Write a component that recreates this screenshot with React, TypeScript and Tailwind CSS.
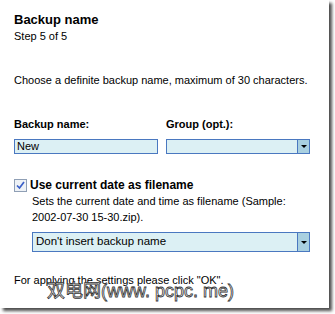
export default function App() {
  return (
    <div className="w-[335px] h-[314px] bg-white overflow-hidden relative" style={{ fontFamily: '"Liberation Sans", Arial, sans-serif' }}>
      <div className="w-[329px] h-[308px] bg-white shadow-[3px_3px_3px_rgba(0,0,0,0.7)] relative text-[11px] text-black">
        <div className="pl-[14px] pt-[12px]">
          <div className="text-[13px] font-bold leading-[16px]">Backup name</div>
          <div className="leading-[14px] mt-[1px]">Step 5 of 5</div>

          <div className="mt-[30px] leading-[14px]">Choose a definite backup name, maximum of 30 characters.</div>

          <div className="flex gap-[8px] mt-[30px]">
            <div className="w-[144px]">
              <div className="font-bold leading-[14px]">Backup name:</div>
              <div className="mt-[8px] h-[15px] border border-[#4a78c0] bg-[#dcf0f4] flex items-center px-[2px] leading-none">New</div>
            </div>
            <div className="w-[144px]">
              <div className="font-bold leading-[14px]">Group (opt.):</div>
              <div className="mt-[8px] h-[15px] border border-[#4a78c0] bg-[#dcf0f4] flex justify-end">
                <div className="w-[12px] h-full bg-[#a9d0e0] border-l border-[#4a78c0] flex items-center justify-center">
                  <div className="w-0 h-0 border-l-[3px] border-r-[3px] border-t-[3px] border-l-transparent border-r-transparent border-t-black" />
                </div>
              </div>
            </div>
          </div>

          <div className="flex items-center gap-[3px] mt-[24px]">
            <div className="w-[13px] h-[13px] border border-[#8f9fb5] bg-[#eef2f6] flex items-center justify-center">
              <svg width="9" height="9" viewBox="0 0 9 9">
                <path d="M1 4.5 L3.5 7 L8 1" fill="none" stroke="#3a5fc8" strokeWidth="1.7" />
              </svg>
            </div>
            <div className="text-[12px] font-bold leading-[14px]">Use current date as filename</div>
          </div>

          <div className="pl-[18px] mt-[1px]">
            <div className="leading-[16px]">
              Sets the current date and time as filename (Sample:
              <br />
              2002-07-30 15-30.zip).
            </div>
            <div className="mt-[7px] w-[278px] h-[20px] border border-[#4a78c0] bg-[#dcf0f4] flex items-center">
              <div className="flex-1 px-[3px] text-[11.5px]">Don't insert backup name</div>
              <div className="w-[12px] h-full bg-[#a9d0e0] border-l border-[#4a78c0] flex items-center justify-center">
                <div className="w-0 h-0 border-l-[3px] border-r-[3px] border-t-[3px] border-l-transparent border-r-transparent border-t-black" />
              </div>
            </div>
          </div>

          <div className="mt-[21px] leading-[14px]">For applying the settings please click "OK".</div>
        </div>

        <div
          className="absolute left-[47px] top-[282px] text-[18px] leading-none text-white"
          style={{ fontFamily: '"Liberation Sans", "Noto Sans CJK SC", sans-serif', WebkitTextStroke: '0.8px #333' }}
        >
          双电网(www. pcpc. me)
        </div>
      </div>
    </div>
  );
}
